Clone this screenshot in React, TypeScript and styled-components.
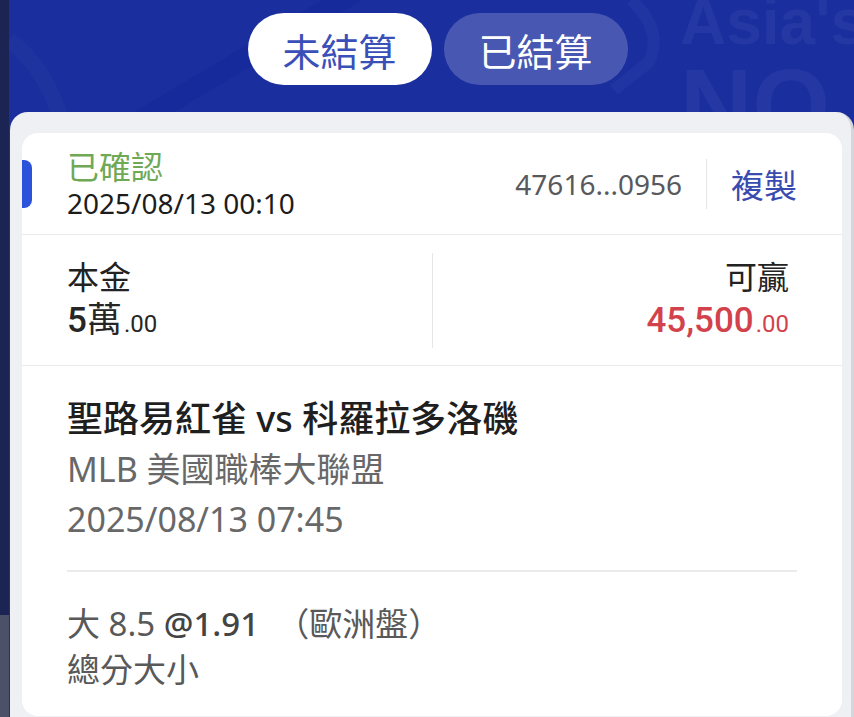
import React from 'react';
import styled, { createGlobalStyle } from 'styled-components';

const GlobalStyle = createGlobalStyle`
  html, body {
    margin: 0;
    padding: 0;
    background: #1b2452;
  }
  body {
    font-family: "Noto Sans", "Noto Sans CJK TC", sans-serif;
  }
`;

const CJK = `"Noto Sans", "Noto Sans CJK TC", sans-serif`;

const Page = styled.div`
  display: flex;
  width: 854px;
  height: 717px;
  overflow: hidden;
`;

const SideStrip = styled.div`
  width: 9px;
  flex-shrink: 0;
  display: flex;
  flex-direction: column;
  background: #1b2452;
`;

const StripFoot = styled.div`
  margin-top: auto;
  height: 102px;
  background: #4c5068;
`;

const Main = styled.div`
  flex: 1;
  position: relative;
  display: flex;
  flex-direction: column;
  background: #1b2e9e;
  overflow: hidden;
`;

const Backdrop = styled.svg`
  position: absolute;
  left: 0;
  top: 0;
  width: 845px;
  height: 130px;
  pointer-events: none;
`;

const Watermark = styled.div`
  position: absolute;
  left: 671px;
  top: -10px;
  font-family: "Liberation Sans", Arial, sans-serif;
  font-weight: 700;
  color: rgba(255, 255, 255, 0.045);
  pointer-events: none;
`;

const WatermarkLine = styled.div<{ $size: number }>`
  font-size: ${({ $size }) => $size}px;
  line-height: 1;
  white-space: nowrap;
`;

const TabBar = styled.div`
  position: relative;
  height: 112px;
  flex-shrink: 0;
  box-sizing: border-box;
  display: flex;
  justify-content: center;
  align-items: flex-start;
  gap: 12px;
  padding: 13px 0 0 12px;
`;

const Tab = styled.div<{ $active?: boolean }>`
  width: 184px;
  height: 72px;
  border-radius: 36px;
  display: flex;
  align-items: center;
  justify-content: center;
  font-family: ${CJK};
  font-size: 38px;
  color: ${({ $active }) => ($active ? '#3b4fb8' : '#ffffff')};
  background: ${({ $active }) => ($active ? '#ffffff' : 'rgba(255, 255, 255, 0.2)')};
`;

const Panel = styled.div`
  position: relative;
  flex: 1;
  display: flex;
  margin-left: 1px;
  padding: 21px 9px 1px 12px;
  background: #eef0f4;
  border-right: 3px solid #d4d6dc;
  border-radius: 18px 18px 0 0;
`;

const Card = styled.div`
  flex: 1;
  display: flex;
  flex-direction: column;
  background: #ffffff;
  border-radius: 16px;
  overflow: hidden;
`;

const HeaderRow = styled.div`
  position: relative;
  height: 101px;
  flex-shrink: 0;
  display: flex;
  align-items: center;
  justify-content: space-between;
  padding: 0 45px;
  border-bottom: 1px solid #ececec;
`;

const Accent = styled.div`
  position: absolute;
  left: 0;
  top: 27px;
  width: 10px;
  height: 48px;
  background: #2c52dc;
  border-radius: 0 8px 8px 0;
`;

const StatusBlock = styled.div`
  display: flex;
  flex-direction: column;
  padding-top: 2px;
`;

const Status = styled.div`
  font-family: ${CJK};
  font-size: 32px;
  line-height: 36px;
  color: #6fa955;
`;

const OrderTime = styled.div`
  font-family: "Noto Sans", sans-serif;
  font-size: 28px;
  line-height: 36px;
  color: #1c1c1c;
`;

const RefGroup = styled.div`
  display: flex;
  align-items: center;
`;

const RefId = styled.div`
  font-family: "Noto Sans", sans-serif;
  font-size: 28px;
  color: #58595c;
`;

const VRule = styled.div<{ $h: number }>`
  width: 1px;
  height: ${({ $h }) => $h}px;
  background: #e6e6e6;
`;

const RefRule = styled(VRule)`
  margin: 0 24px;
`;

const CopyLink = styled.div`
  font-family: ${CJK};
  font-size: 33px;
  color: #3a4bb0;
  cursor: pointer;
`;

const AmountRow = styled.div`
  height: 130px;
  flex-shrink: 0;
  display: grid;
  grid-template-columns: 1fr 1px 1fr;
  align-items: center;
  border-bottom: 1px solid #ececec;
`;

const AmountCell = styled.div<{ $right?: boolean }>`
  display: flex;
  flex-direction: column;
  align-items: ${({ $right }) => ($right ? 'flex-end' : 'flex-start')};
  padding: ${({ $right }) => ($right ? '4px 53px 0 0' : '4px 0 0 45px')};
`;

const AmountLabel = styled.div`
  font-family: ${CJK};
  font-size: 32px;
  line-height: 40px;
  color: #222222;
`;

const AmountValue = styled.div<{ $tone?: string }>`
  font-family: "Roboto", "Noto Sans CJK TC", sans-serif;
  font-size: 35px;
  font-weight: 500;
  line-height: 48px;
  color: ${({ $tone }) => $tone || '#262626'};
`;

const Unit = styled.span`
  font-weight: 400;
`;

const Cents = styled.span`
  font-size: 24px;
  font-weight: 400;
  margin-left: 2px;
`;

const MatchSection = styled.div`
  padding: 28px 45px 0;
`;

const MatchTitle = styled.div`
  font-family: ${CJK};
  font-size: 36px;
  font-weight: 500;
  line-height: 50px;
  color: #1f1f1f;
`;

const MatchMeta = styled.div<{ $size: number }>`
  font-family: ${CJK};
  font-size: ${({ $size }) => $size}px;
  line-height: 50px;
  color: #686868;
`;

const InnerRule = styled.div`
  height: 2px;
  margin: 26px 45px 0;
  background: #ebebeb;
`;

const BetSection = styled.div`
  padding: 29px 45px 0;
`;

const BetLine = styled.div`
  font-family: ${CJK};
  font-size: 33px;
  line-height: 46px;
  color: #595959;
  white-space: pre;
`;

const Odds = styled.span`
  font-weight: 500;
  color: #444444;
`;

export default function App() {
  return (
    <>
      <GlobalStyle />
      <Page>
        <SideStrip>
          <StripFoot />
        </SideStrip>
        <Main>
          <Backdrop viewBox="0 0 845 130">
            <path d="M95 130 L330 -10 L370 -10 L135 130 Z" fill="#16289a" opacity="0.6" />
            <path d="M0 40 Q40 70 55 130" stroke="#22379f" strokeWidth="16" fill="none" opacity="0.6" />
            <path d="M622 0 Q655 30 640 62 L605 90" stroke="#2a3fa8" strokeWidth="12" fill="none" opacity="0.35" />
          </Backdrop>
          <Watermark>
            <WatermarkLine $size={64}>Asia's</WatermarkLine>
            <WatermarkLine $size={100}>NO</WatermarkLine>
          </Watermark>
          <TabBar>
            <Tab $active>未結算</Tab>
            <Tab>已結算</Tab>
          </TabBar>
          <Panel>
            <Card>
              <HeaderRow>
                <Accent />
                <StatusBlock>
                  <Status>已確認</Status>
                  <OrderTime>2025/08/13 00:10</OrderTime>
                </StatusBlock>
                <RefGroup>
                  <RefId>47616...0956</RefId>
                  <RefRule $h={50} />
                  <CopyLink>複製</CopyLink>
                </RefGroup>
              </HeaderRow>
              <AmountRow>
                <AmountCell>
                  <AmountLabel>本金</AmountLabel>
                  <AmountValue>
                    5<Unit>萬</Unit>
                    <Cents>.00</Cents>
                  </AmountValue>
                </AmountCell>
                <VRule $h={95} />
                <AmountCell $right>
                  <AmountLabel>可贏</AmountLabel>
                  <AmountValue $tone="#d2424c">
                    45,500<Cents>.00</Cents>
                  </AmountValue>
                </AmountCell>
              </AmountRow>
              <MatchSection>
                <MatchTitle>聖路易紅雀 vs 科羅拉多洛磯</MatchTitle>
                <MatchMeta $size={34}>MLB 美國職棒大聯盟</MatchMeta>
                <MatchMeta $size={34}>2025/08/13 07:45</MatchMeta>
              </MatchSection>
              <InnerRule />
              <BetSection>
                <BetLine>
                  大 8.5 <Odds>@1.91</Odds>  （歐洲盤）
                </BetLine>
                <BetLine>總分大小</BetLine>
              </BetSection>
            </Card>
          </Panel>
        </Main>
      </Page>
    </>
  );
}
